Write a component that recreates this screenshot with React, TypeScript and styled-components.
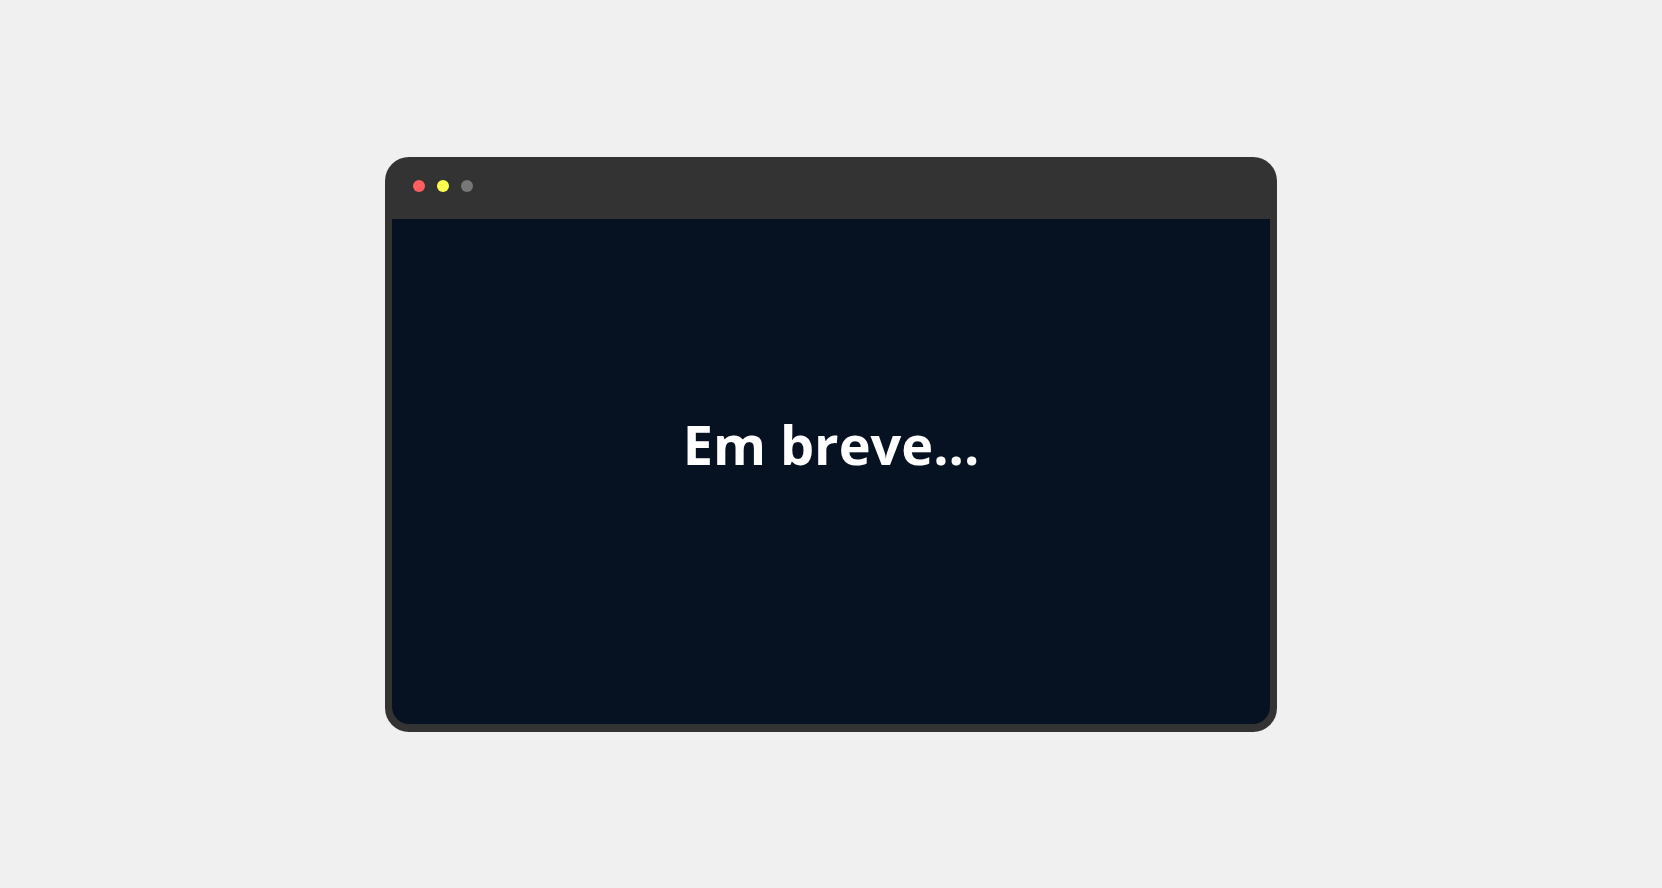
import React from "react";
import styled, { createGlobalStyle } from "styled-components";

const Global = createGlobalStyle`
  html, body { margin: 0; padding: 0; background: #f0f0f0; }
  body { font-family: "Open Sans", "Noto Sans", sans-serif; }
`;

const Page = styled.div`
  min-height: 100vh;
  display: flex;
  align-items: center;
  justify-content: center;
`;

const Window = styled.div`
  width: 892px;
  height: 575px;
  box-sizing: border-box;
  background: #333333;
  border-radius: 24px;
  padding: 0 7px 8px 7px;
  display: flex;
  flex-direction: column;
`;

const TitleBar = styled.div`
  height: 62px;
  flex: none;
  display: flex;
  align-items: center;
  gap: 12px;
  padding-left: 21px;
  padding-bottom: 4px;
  box-sizing: border-box;
`;

const Dot = styled.span<{ $color: string }>`
  width: 12px;
  height: 12px;
  border-radius: 50%;
  background: ${(p) => p.$color};
`;

const Screen = styled.div`
  flex: 1;
  background: #061222;
  border-radius: 0 0 17px 17px;
  display: flex;
  align-items: center;
  justify-content: center;
  padding-bottom: 55px;
`;

const Title = styled.h1`
  margin: 0;
  color: #ffffff;
  font-family: "Open Sans", sans-serif;
  font-weight: 700;
  font-size: 54px;
`;

export default function App() {
  return (
    <>
      <Global />
      <Page>
        <Window>
          <TitleBar>
            <Dot $color="#ff5f5f" />
            <Dot $color="#ffff4f" />
            <Dot $color="#777777" />
          </TitleBar>
          <Screen>
            <Title>Em breve...</Title>
          </Screen>
        </Window>
      </Page>
    </>
  );
}
